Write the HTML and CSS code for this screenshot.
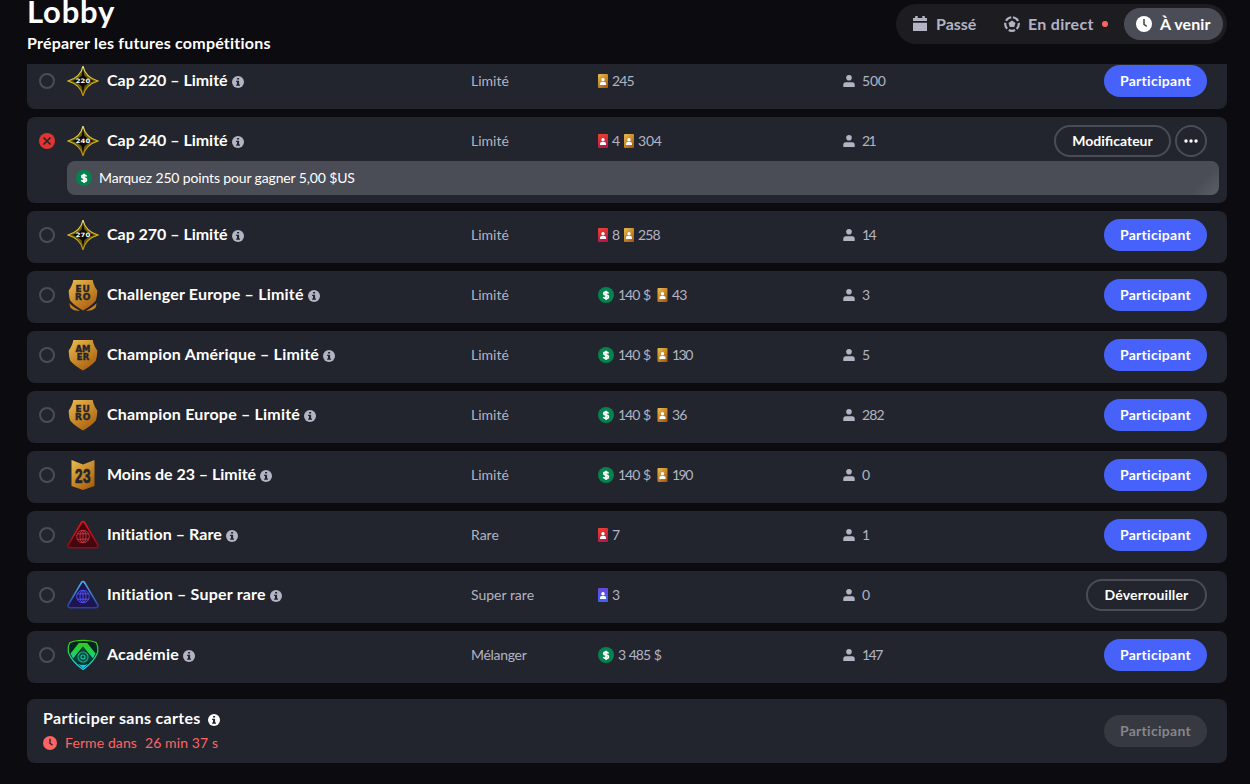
FILE: index.html
```html
<!DOCTYPE html>
<html lang="fr">
<head>
<meta charset="utf-8">
<title>Lobby</title>
<link rel="stylesheet" href="styles.css">
</head>
<body>
<svg class="defs" width="0" height="0" aria-hidden="true">
  <defs>
    <linearGradient id="goldFill" x1="0" y1="0" x2=".7" y2="1"><stop offset="0" stop-color="#e9bd50"/><stop offset="1" stop-color="#ad600e"/></linearGradient>
    <linearGradient id="redFill" x1="0" y1="0" x2="0.3" y2="1"><stop offset="0" stop-color="#f3422c"/><stop offset="1" stop-color="#b81948"/></linearGradient>
    <linearGradient id="blueFill" x1="0" y1="0" x2="0" y2="1"><stop offset="0" stop-color="#6b47dc"/><stop offset="1" stop-color="#3866f5"/></linearGradient>
    <linearGradient id="starLine" x1="0" y1="0" x2="0" y2="1"><stop offset="0" stop-color="#e8e480"/><stop offset=".5" stop-color="#d8bc18"/><stop offset="1" stop-color="#b88a10"/></linearGradient>
    <linearGradient id="triRed" x1="0" y1="0" x2="0" y2="1"><stop offset="0" stop-color="#ee1414"/><stop offset="1" stop-color="#8d0c18"/></linearGradient>
    <linearGradient id="triBlue" x1="0" y1="0" x2="0" y2="1"><stop offset="0" stop-color="#48b4ee"/><stop offset="1" stop-color="#2f3fa0"/></linearGradient>
    <linearGradient id="acad" gradientUnits="userSpaceOnUse" x1="0" y1="1" x2="0" y2="30"><stop offset="0" stop-color="#36cc05"/><stop offset=".4" stop-color="#22cf50"/><stop offset="1" stop-color="#12d5ff"/></linearGradient>
  </defs>
  <symbol id="info" viewBox="0 0 12 12"><circle cx="6" cy="6" r="6" fill="currentColor"/><path d="M5.100 2h2v1.600h-2zM4.100 4.700h3v3.900h.9v1.200H4.100V8.600H5V5.900h-.9z" fill="#22252d"/></symbol>
  <symbol id="star" viewBox="0 0 32 32"><path d="M16 1Q18 12 31 16 18 20 16 31 14 20 1 16 14 12 16 1z" fill="#6b590c" stroke="url(#starLine)" stroke-width="1.200"/><path d="M16 3.500l1.300 7 3.700 3.300 6 2.200-6 2.200-3.700 3.300-1.300 7-1.300-7L11 18.200 5 16l6-2.200 3.700-3.300z" fill="#0c0a04"/></symbol>
  <symbol id="shield" viewBox="0 0 32 32"><path d="M6.300 1h19.400c.6 3.600 2 7.200 4.600 10.500-.2 5-.6 7.500-1.600 10.300C25 26 20.500 29 16 31.500 11.500 29 7 26 3.300 21.800 2.300 19 1.900 16.500 1.700 11.500 4.300 8.200 5.700 4.600 6.300 1z" fill="url(#goldFill)"/></symbol>
  <symbol id="shield-wings" viewBox="0 0 32 32"><path d="M6.300 1h19.400c.6 3.600 2 7.200 4.600 10.500-.2 5-.6 7.500-1.600 10.300C25 26 20.500 29 16 31.500 11.500 29 7 26 3.300 21.800 2.300 19 1.900 16.500 1.700 11.500 4.300 8.200 5.700 4.600 6.300 1z" fill="url(#goldFill)"/><path d="M2.300 24c3.500 3.700 6.500 5.300 11 7.800-5 .4-8-.9-10-3.200zM29.700 24c-3.500 3.700-6.500 5.300-11 7.800 5 .4 8-.9 10-3.200z" fill="#c97c20"/><path d="M2 22.500C6 27 10 29.300 14.500 31.700M30 22.500C26 27 22 29.300 17.500 31.700" fill="none" stroke="#22252d" stroke-width="1.200"/></symbol>
  <symbol id="banner" viewBox="0 0 32 32"><path d="M4.500 1L16 5.500 27.500 1v26L16 31 4.500 27z" fill="url(#goldFill)"/></symbol>
  <symbol id="globe" viewBox="0 0 14 14"><g fill="none" stroke="currentColor" stroke-width="1"><circle cx="7" cy="7" r="6.300"/><ellipse cx="7" cy="7" rx="3" ry="6.300"/><path d="M7 .7v12.600M1.300 4.300h11.400M1.300 9.700h11.400"/></g></symbol>
  <symbol id="tri" viewBox="0 0 32 32"><path d="M14.500 3.500q1.500-2.200 3 0l13.300 22.300q.8 2.500-1.800 2.900H3q-2.600-.4-1.800-2.900z" stroke-width="1.500"/></symbol>
  <symbol id="academy" viewBox="0 0 32 32"><path d="M16 1.300c5 0 10 .6 13.300 2.500 1.600 3 1.700 6.500 1.200 10C28 20 22.500 26 16 30.500 9.500 26 4 20 1.500 13.800 1 10.300 1.100 6.800 2.700 3.800 6 1.900 11 1.300 16 1.300z" fill="#062420" stroke="url(#acad)" stroke-width="1.300"/><path d="M11.800 4h8.400L28.500 14.500 26 19.500 16 7.500 6 19.500 3.500 14.500z" fill="url(#acad)"/><path d="M16 8.500l9.500 11.500L16 26 6.500 20z" fill="#05463c"/><path d="M6.500 20.500Q11 26 16 26t9.500-5.500L16 29.500z" fill="#12c7e8"/><circle cx="16" cy="18" r="5" fill="none" stroke="#14a886" stroke-width="1.200"/><circle cx="16" cy="18" r="2" fill="none" stroke="#18c89b" stroke-width="1.200"/></symbol>
  <symbol id="card" viewBox="0 0 10 14"><rect width="10" height="14" rx="1"/><circle cx="5" cy="5.700" r="1.700" fill="#fff"/><path d="M2 11V9.500Q2 8 3.500 8h3Q8 8 8 9.500V11z" fill="#fff"/></symbol>
  <symbol id="cash" viewBox="0 0 16 16"><circle cx="8" cy="8" r="8" fill="#05824d"/><path d="M10.400 6.400Q10 5.200 8 5.200 5.800 5.200 5.800 6.700 5.800 7.900 8 8.200q2.400.3 2.400 1.700Q10.400 11.400 8 11.400 5.900 11.400 5.500 10.100M8 3.700v9.200" fill="none" stroke="#fff" stroke-width="1.700"/></symbol>
  <symbol id="person" viewBox="0 0 12 12"><circle cx="6" cy="2.800" r="2.800"/><path d="M.3 12V9.800Q.3 7.300 2.800 7.300h6.400q2.500 0 2.500 2.500V12z"/></symbol>
  <symbol id="clock" viewBox="0 0 16 16"><circle cx="8" cy="8" r="8" fill="currentColor"/><path d="M8 3v5.300l2.800 2.100" fill="none" stroke="var(--hand)" stroke-width="1.600"/></symbol>
</svg>

<div class="page">
  <header class="header">
    <div class="heading">
      <h1 class="heading-title">Lobby</h1>
      <p class="heading-sub">Préparer les futures compétitions</p>
    </div>
    <nav class="tabs">
      <a class="tab tab-past"><svg class="ico16" viewBox="0 0 16 16" fill="currentColor"><path d="M1 5V2h2.200V0h2.500v2h4.600V0h2.500v2H15v3zM1 6.800h14V15H1z"/></svg><span>Passé</span></a>
      <a class="tab tab-live"><svg class="ico16" viewBox="0 0 16 16"><path d="M8 4.500l3.500 2.600-1.300 4H5.800l-1.300-4z" fill="currentColor"/><circle cx="8" cy="8" r="6.800" fill="none" stroke="currentColor" stroke-width="2.200" stroke-dasharray="6.540 2" stroke-dashoffset="-1" transform="rotate(-90 8 8)"/></svg><span>En direct</span><i class="live-dot"></i></a>
      <a class="tab tab-active"><svg class="ico16"><use href="#clock"/></svg><span>À venir</span></a>
    </nav>
  </header>

  <main class="list">
    <section class="card card-first"><div class="row">
      <i class="radio"></i><div class="badge"><svg><use href="#star"/></svg><b class="cap">220</b></div>
      <div class="name name-digits"><span>Cap 220 – Limité</span><svg class="info"><use href="#info"/></svg></div><div class="kind">Limité</div>
      <div class="prizes"><svg class="pcard gold"><use href="#card"/></svg><span>245</span></div>
      <div class="players"><svg><use href="#person"/></svg><span class="loose">500</span></div><div class="actions"><button class="btn">Participant</button></div>
    </div></section>

    <section class="card"><div class="row">
      <i class="radio radio-error"><svg viewBox="0 0 16 16"><path d="M4.500 4.500l7 7m0-7l-7 7" stroke="#22252d" stroke-width="1.700"/></svg></i><div class="badge"><svg><use href="#star"/></svg><b class="cap">240</b></div>
      <div class="name name-digits"><span>Cap 240 – Limité</span><svg class="info"><use href="#info"/></svg></div><div class="kind">Limité</div>
      <div class="prizes"><svg class="pcard red"><use href="#card"/></svg><span class="single">4</span><svg class="pcard gold"><use href="#card"/></svg><span class="loose">304</span></div>
      <div class="players"><svg><use href="#person"/></svg><span class="tight">21</span></div>
      <div class="actions"><button class="btn btn-outline btn-edit">Modificateur</button><button class="btn btn-outline btn-more"><svg viewBox="0 0 14 4" fill="#fff"><circle cx="2" cy="2" r="1.700"/><circle cx="7" cy="2" r="1.700"/><circle cx="12" cy="2" r="1.700"/></svg></button></div>
    </div>
    <div class="mission"><svg class="cash"><use href="#cash"/></svg><span>Marquez 250 points pour gagner 5,00 $US</span></div></section>

    <section class="card"><div class="row">
      <i class="radio"></i><div class="badge"><svg><use href="#star"/></svg><b class="cap">270</b></div>
      <div class="name name-digits"><span>Cap 270 – Limité</span><svg class="info"><use href="#info"/></svg></div><div class="kind">Limité</div>
      <div class="prizes"><svg class="pcard red"><use href="#card"/></svg><span class="single">8</span><svg class="pcard gold"><use href="#card"/></svg><span>258</span></div>
      <div class="players"><svg><use href="#person"/></svg><span class="tight">14</span></div><div class="actions"><button class="btn">Participant</button></div>
    </div></section>

    <section class="card"><div class="row">
      <i class="radio"></i><div class="badge"><svg><use href="#shield-wings"/></svg><b class="region">EU<br>RO</b></div>
      <div class="name"><span>Challenger Europe – Limité</span><svg class="info"><use href="#info"/></svg></div><div class="kind">Limité</div>
      <div class="prizes"><svg class="cash"><use href="#cash"/></svg><span class="money">140 $</span><svg class="pcard wide gold"><use href="#card"/></svg><span>43</span></div>
      <div class="players"><svg><use href="#person"/></svg><span>3</span></div><div class="actions"><button class="btn">Participant</button></div>
    </div></section>

    <section class="card"><div class="row">
      <i class="radio"></i><div class="badge"><svg><use href="#shield"/></svg><b class="region region-amer">AM<br>ER</b></div>
      <div class="name"><span>Champion Amérique – Limité</span><svg class="info"><use href="#info"/></svg></div><div class="kind">Limité</div>
      <div class="prizes"><svg class="cash"><use href="#cash"/></svg><span class="money">140 $</span><svg class="pcard wide gold"><use href="#card"/></svg><span class="tight">130</span></div>
      <div class="players"><svg><use href="#person"/></svg><span>5</span></div><div class="actions"><button class="btn">Participant</button></div>
    </div></section>

    <section class="card"><div class="row">
      <i class="radio"></i><div class="badge"><svg><use href="#shield"/></svg><b class="region">EU<br>RO</b></div>
      <div class="name"><span>Champion Europe – Limité</span><svg class="info"><use href="#info"/></svg></div><div class="kind">Limité</div>
      <div class="prizes"><svg class="cash"><use href="#cash"/></svg><span class="money">140 $</span><svg class="pcard wide gold"><use href="#card"/></svg><span>36</span></div>
      <div class="players"><svg><use href="#person"/></svg><span>282</span></div><div class="actions"><button class="btn">Participant</button></div>
    </div></section>

    <section class="card"><div class="row">
      <i class="radio"></i><div class="badge"><svg><use href="#banner"/></svg><b class="age">23</b></div>
      <div class="name name-digits"><span>Moins de 23 – Limité</span><svg class="info"><use href="#info"/></svg></div><div class="kind">Limité</div>
      <div class="prizes"><svg class="cash"><use href="#cash"/></svg><span class="money">140 $</span><svg class="pcard wide gold"><use href="#card"/></svg><span class="tight">190</span></div>
      <div class="players"><svg><use href="#person"/></svg><span>0</span></div><div class="actions"><button class="btn">Participant</button></div>
    </div></section>

    <section class="card"><div class="row">
      <i class="radio"></i><div class="badge badge-red"><svg viewBox="0 0 32 32"><use href="#tri" width="32" height="32" fill="#45070f" stroke="url(#triRed)"/><use href="#globe" x="9" y="10.500" width="14" height="14"/></svg></div>
      <div class="name name-rare"><span>Initiation – Rare</span><svg class="info"><use href="#info"/></svg></div><div class="kind">Rare</div>
      <div class="prizes"><svg class="pcard red"><use href="#card"/></svg><span>7</span></div>
      <div class="players"><svg><use href="#person"/></svg><span>1</span></div><div class="actions"><button class="btn">Participant</button></div>
    </div></section>

    <section class="card"><div class="row">
      <i class="radio"></i><div class="badge badge-blue"><svg viewBox="0 0 32 32"><use href="#tri" width="32" height="32" fill="#1d1452" stroke="url(#triBlue)"/><use href="#globe" x="9" y="10.500" width="14" height="14"/></svg></div>
      <div class="name"><span>Initiation – Super rare</span><svg class="info"><use href="#info"/></svg></div><div class="kind">Super rare</div>
      <div class="prizes"><svg class="pcard blue"><use href="#card"/></svg><span>3</span></div>
      <div class="players"><svg><use href="#person"/></svg><span>0</span></div><div class="actions"><button class="btn btn-outline btn-unlock">Déverrouiller</button></div>
    </div></section>

    <section class="card"><div class="row">
      <i class="radio"></i><div class="badge"><svg><use href="#academy"/></svg></div>
      <div class="name"><span>Académie</span><svg class="info"><use href="#info"/></svg></div><div class="kind kind-mix">Mélanger</div>
      <div class="prizes"><svg class="cash"><use href="#cash"/></svg><span class="money">3 485 $</span></div>
      <div class="players"><svg><use href="#person"/></svg><span class="tight">147</span></div><div class="actions"><button class="btn">Participant</button></div>
    </div></section>

    <section class="card card-free">
      <div class="free">
        <div class="free-title"><span>Participer sans cartes</span><svg class="info"><use href="#info"/></svg></div>
        <div class="free-time"><svg><use href="#clock"/></svg><span class="closes">Ferme dans</span><span class="countdown">26 min 37 s</span></div>
      </div>
      <button class="btn btn-disabled">Participant</button>
    </section>
  </main>
</div>
</body>
</html>
```
FILE: styles.css
```css
* { box-sizing: border-box; }
body { margin: 0; background: #0c0b10; color: #fff; font-family: Lato, "Open Sans", sans-serif; overflow: hidden; }
.defs { position: absolute; }
svg { display: block; flex: none; }
.page { height: 784px; padding: 0 23px 0 27px; }

.header { height: 64px; display: flex; justify-content: space-between; align-items: flex-start; }
.heading-title { margin: 0; font-size: 31px; line-height: 23px; font-weight: 700; letter-spacing: .8px; }
.heading-sub { margin: 8px 0 0; font-size: 16px; line-height: 24px; font-weight: 700; letter-spacing: .22px; }
.tabs { display: flex; width: 331px; height: 40px; margin-top: 4px; padding: 4px; border-radius: 20px; background: #1d1c21; }
.tab { display: flex; align-items: center; gap: 8px; height: 32px; padding: 0 12px; border-radius: 16px; color: #b2b4c4; font-size: 16px; font-weight: 700; letter-spacing: .2px; white-space: nowrap; }
.tab span { margin-top: -2px; }
.tab-past { width: 92px; letter-spacing: 0; }
.tab-live { width: 132px; letter-spacing: .3px; }
.tab-active { width: 99px; background: #4b4d56; color: #fff; letter-spacing: .1px; --hand: #4b4d56; }
.ico16 { width: 16px; height: 16px; }
.live-dot { flex: none; width: 6px; height: 6px; border-radius: 50%; background: #ff6464; }

.list { height: 720px; overflow: hidden; display: flex; flex-direction: column; gap: 8px; }
.card { flex: none; padding: 8px 20px 8px 12px; background: #22252d; border-radius: 8px; }
.card-first { margin-top: -7px; }
.row { display: grid; grid-template-columns: 28px 40px 364px 127px 245px 1fr auto; align-items: center; height: 36px; padding-bottom: 4px; }
.radio { width: 16px; height: 16px; border: 2px solid #4b4d56; border-radius: 50%; }
.radio-error { border: 0; background: #e3342f; }
.badge { position: relative; width: 32px; height: 32px; }
.badge svg { width: 32px; height: 32px; }
.badge b { position: absolute; inset: 0; display: flex; align-items: center; justify-content: center; text-align: center; }
.badge .cap { font: 700 6px/8px "DejaVu Sans", sans-serif; transform: scaleX(1.150); }
.badge .region { padding-bottom: 2px; font: 700 8px/8px "DejaVu Sans", sans-serif; letter-spacing: .6px; color: #22252d; -webkit-text-stroke: .4px #22252d; transform: scaleX(1.120); }
.badge .region-amer { letter-spacing: .1px; transform: scaleX(1.050); }
.badge .age { padding-top: 1px; font: 700 20px/20px "Liberation Sans Narrow", "Liberation Sans", sans-serif; letter-spacing: .6px; color: #22252d; -webkit-text-stroke: .7px #22252d; transform: scaleX(.68); }
.badge-red { color: #c23442; }
.badge-blue { color: #5050f0; }
.name { display: flex; align-items: center; gap: 4px; font-size: 16px; line-height: 24px; font-weight: 700; letter-spacing: .2px; white-space: nowrap; }
.name span { margin: -1px 0 1px; }
.name-digits { letter-spacing: -.02px; }
.name-rare { letter-spacing: .08px; }
.info { width: 12px; height: 12px; margin-top: 2px; color: #b2b4c4; }
.kind, .prizes, .players { font-size: 14px; line-height: 20px; color: #b2b4c4; }
.kind { letter-spacing: 0; }
.kind-mix { letter-spacing: -.3px; }
.prizes, .players { letter-spacing: -.9px; }
.prizes { display: flex; align-items: center; gap: 4px; white-space: nowrap; }
.prizes .money { width: 35px; letter-spacing: -1px; word-spacing: 1px; }
.tight { letter-spacing: -1.500px; }
.loose { letter-spacing: -.2px; }
.single { width: 8px; letter-spacing: 0; }
.pcard { width: 10px; height: 14px; }
.pcard.wide { width: 11px; height: 14px; }
.gold { fill: url(#goldFill); }
.red { fill: url(#redFill); }
.blue { fill: url(#blueFill); }
.cash { width: 16px; height: 16px; }
.players { display: flex; align-items: center; gap: 7px; }
.players svg { width: 12px; height: 12px; fill: #b2b4c4; }
.actions { display: flex; gap: 4px; }
.btn { width: 103px; height: 32px; padding: 0; border: 0; border-radius: 16px; background: #4762fa; color: #fff; font: 700 14px/20px Lato, sans-serif; letter-spacing: .3px; white-space: nowrap; }
.btn-outline { background: transparent; border: 2px solid #4b4d56; }
.btn-edit { width: 117px; letter-spacing: 0; }
.btn-unlock { width: 121px; letter-spacing: .15px; }
.btn-more { width: 32px; display: flex; align-items: center; justify-content: center; }
.btn-more svg { width: 14px; height: 4px; }
.mission { display: flex; align-items: center; gap: 7px; height: 34px; margin: 0 -12px 0 28px; padding: 0 9px; border-radius: 8px; background: linear-gradient(135deg, #4b4d56 0, #4b4d56 calc(100% - 22px), #5d5f67 100%); font-size: 14px; letter-spacing: -.14px; }
.mission span { margin-top: -1px; }

.card-free { display: flex; align-items: center; justify-content: space-between; height: 64px; margin-top: 8px; padding: 0 20px 0 16px; }
.free-title { display: flex; align-items: center; gap: 7px; font-size: 16px; line-height: 24px; font-weight: 700; letter-spacing: .3px; }
.free-title span { margin: -1px 0 1px; }
.free-title .info { color: #fff; }
.free-time { display: flex; align-items: center; color: #ff6464; font-size: 14px; line-height: 24px; letter-spacing: .1px; --hand: #22252d; }
.free-time svg { width: 14px; height: 14px; margin-right: 8px; }
.closes { margin-right: 8px; }
.btn-disabled { background: #373940; color: #85868c; }
```
